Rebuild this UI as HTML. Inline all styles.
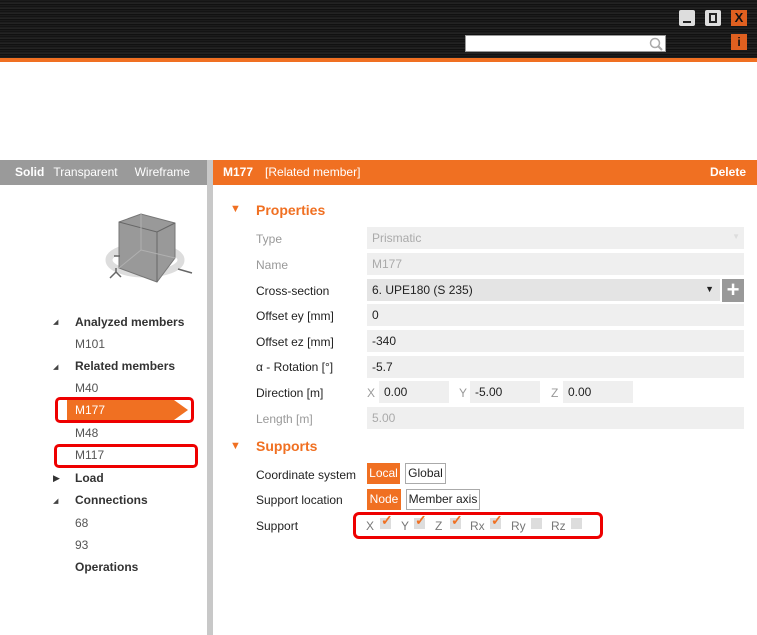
<!DOCTYPE html>
<html><head><style>
*{margin:0;padding:0;box-sizing:border-box}
body{width:757px;height:635px;overflow:hidden;background:#fff;font-family:"Liberation Sans",sans-serif;font-size:12px;color:#222;position:relative}
.a{position:absolute}
.hdr{left:0;top:0;width:757px;height:59px;background:repeating-linear-gradient(180deg,#1e1e1e 0,#111 2px,#2c2c2c 3px,#080808 5px)}
.ol{left:0;top:58px;width:757px;height:4px;background:#f07022}
.lbl{left:256px;font-size:12px}
.gray{color:#999}
.inp{left:367px;width:377px;height:22px;background:#efefef;padding:4px 5px;font-size:12px}
.tr{left:75px;font-size:12px;color:#555}
.trb{left:75px;font-size:12px;font-weight:bold;color:#333}
.tri{left:53px;font-size:7px;color:#444}
.cb{position:absolute;width:11px;height:11px;background:#ddd}
.ck{position:absolute;left:1px;top:-6px;color:#f07022;font-size:14px;font-weight:bold}
.sl{position:absolute;top:519px;color:#777}
</style></head><body>
<div class="a hdr"></div>
<div class="a ol"></div>
<div class="a" style="left:679px;top:10px;width:16px;height:16px;background:#ddd;border-radius:2px"><div class="a" style="left:4px;top:11px;width:8px;height:2px;background:#222"></div></div>
<div class="a" style="left:705px;top:10px;width:16px;height:16px;background:#ddd;border-radius:2px"><div class="a" style="left:4px;top:3px;width:8px;height:10px;border:2px solid #222"></div></div>
<div class="a" style="left:731px;top:10px;width:16px;height:16px;background:#e06020;color:#111;font-weight:bold;font-size:13px;text-align:center;line-height:16px">X</div>
<div class="a" style="left:731px;top:34px;width:16px;height:16px;background:#e06020;color:#111;font-weight:bold;font-size:12px;text-align:center;line-height:16px">i</div>
<div class="a" style="left:465px;top:35px;width:201px;height:17px;background:#fff;border:1px solid #999"><svg class="a" style="left:183px;top:1px" width="15" height="14"><circle cx="6" cy="6" r="4.5" fill="none" stroke="#aaa" stroke-width="1.5"/><path d="M9 9l4 4" stroke="#aaa" stroke-width="2"/></svg></div>

<div class="a" style="left:0;top:160px;width:207px;height:25px;background:#9a9a9a;color:#fff;font-size:12px;line-height:25px"><b style="margin-left:15px">Solid</b><span style="margin-left:9px">Transparent</span><span style="margin-left:17px">Wireframe</span></div>
<div class="a" style="left:207px;top:160px;width:6px;height:475px;background:#c8c8c8"></div>
<div class="a" style="left:213px;top:160px;width:544px;height:25px;background:#f07022;color:#fff;line-height:25px"><b style="margin-left:10px">M177</b><span style="margin-left:12px">[Related member]</span><b class="a" style="right:11px;top:0">Delete</b></div>

<svg class="a" style="left:100px;top:210px" width="95" height="80"><ellipse cx="45" cy="50" rx="36" ry="14" fill="none" stroke="#ddd" stroke-width="7"/><path d="M19 12L41 4L75 13L75 48L57 72L19 58Z" fill="#999" stroke="#777"/><path d="M19 12L57 22L75 13M57 22L57 72" fill="none" stroke="#666"/><path d="M41 4L41 40L19 58M41 40L75 48" fill="none" stroke="#b0b0b0"/><path d="M10 68l6-6 5 5M16 62v-4M78 59l14 4M14 46l6 0" stroke="#666" fill="none" stroke-width="1.5"/></svg>

<div class="a tri" style="top:318px">◢</div><div class="a trb" style="top:315px">Analyzed members</div>
<div class="a tr" style="top:337px">M101</div>
<div class="a tri" style="top:363px">◢</div><div class="a trb" style="top:359px">Related members</div>
<div class="a tr" style="top:381px">M40</div>
<div class="a" style="left:67px;top:400px;width:107px;height:21px;background:#f07022"></div>
<div class="a" style="left:174px;top:400px;width:0;height:0;border-top:10.5px solid transparent;border-bottom:10.5px solid transparent;border-left:14px solid #f07022"></div>
<div class="a" style="left:75px;top:403px;color:#fff">M177</div>
<div class="a" style="left:55px;top:397px;width:139px;height:26px;border:3px solid #e00;border-radius:5px"></div>
<div class="a tr" style="top:426px">M48</div>
<div class="a tr" style="top:448px">M117</div>
<div class="a" style="left:54px;top:444px;width:144px;height:24px;border:3px solid #e00;border-radius:5px"></div>
<div class="a" style="left:53px;top:473px;font-size:9px;color:#333">▶</div><div class="a trb" style="top:471px">Load</div>
<div class="a tri" style="top:497px">◢</div><div class="a trb" style="top:493px">Connections</div>
<div class="a tr" style="top:516px">68</div>
<div class="a tr" style="top:538px">93</div>
<div class="a trb" style="top:560px">Operations</div>

<div class="a" style="left:230px;top:203px;color:#f07022;font-size:11px">▼</div>
<div class="a" style="left:256px;top:202px;color:#f07022;font-size:14px;font-weight:bold">Properties</div>
<div class="a lbl gray" style="top:232px">Type</div><div class="a inp" style="top:227px;color:#aaa">Prismatic<span class="a" style="right:4px;top:5px;font-size:8px;color:#ddd">▼</span></div>
<div class="a lbl gray" style="top:258px">Name</div><div class="a inp" style="top:253px;color:#aaa">M177</div>
<div class="a lbl" style="top:284px">Cross-section</div><div class="a inp" style="top:279px;width:353px;background:#e4e4e4">6. UPE180 (S 235)<span class="a" style="right:6px;top:5px;font-size:9px">▼</span></div>
<div class="a" style="left:722px;top:279px;width:22px;height:23px;background:#999;color:#fff;font-size:22px;font-weight:bold;text-align:center;line-height:22px">+</div>
<div class="a lbl" style="top:309px">Offset ey [mm]</div><div class="a inp" style="top:304px">0</div>
<div class="a lbl" style="top:335px">Offset ez [mm]</div><div class="a inp" style="top:330px">-340</div>
<div class="a lbl" style="top:360px">α - Rotation [°]</div><div class="a inp" style="top:356px">-5.7</div>
<div class="a lbl" style="top:386px">Direction [m]</div>
<div class="a gray" style="left:367px;top:386px">X</div><div class="a inp" style="left:379px;top:381px;width:70px">0.00</div>
<div class="a gray" style="left:459px;top:386px">Y</div><div class="a inp" style="left:470px;top:381px;width:70px">-5.00</div>
<div class="a gray" style="left:551px;top:386px">Z</div><div class="a inp" style="left:563px;top:381px;width:70px">0.00</div>
<div class="a lbl gray" style="top:412px">Length [m]</div><div class="a inp" style="top:407px;color:#aaa">5.00</div>

<div class="a" style="left:230px;top:440px;color:#f07022;font-size:11px">▼</div>
<div class="a" style="left:256px;top:438px;color:#f07022;font-size:14px;font-weight:bold">Supports</div>
<div class="a lbl" style="top:468px">Coordinate system</div>
<div class="a" style="left:367px;top:463px;width:33px;height:21px;background:#f07022;color:#fff;line-height:21px;text-align:center">Local</div>
<div class="a" style="left:405px;top:463px;width:41px;height:21px;border:1px solid #aaa;line-height:19px;text-align:center">Global</div>
<div class="a lbl" style="top:493px">Support location</div>
<div class="a" style="left:367px;top:489px;width:34px;height:21px;background:#f07022;color:#fff;line-height:21px;text-align:center">Node</div>
<div class="a" style="left:406px;top:489px;width:74px;height:21px;border:1px solid #aaa;line-height:19px;text-align:center">Member axis</div>
<div class="a lbl" style="top:519px">Support</div>
<div class="a" style="left:353px;top:512px;width:250px;height:27px;border:3px solid #e00;border-radius:6px"></div>
<span class="sl" style="left:366px">X</span><span class="cb" style="left:380px;top:518px"><span class="ck">✓</span></span>
<span class="sl" style="left:401px">Y</span><span class="cb" style="left:414px;top:518px"><span class="ck">✓</span></span>
<span class="sl" style="left:435px">Z</span><span class="cb" style="left:450px;top:518px"><span class="ck">✓</span></span>
<span class="sl" style="left:470px">Rx</span><span class="cb" style="left:490px;top:518px"><span class="ck">✓</span></span>
<span class="sl" style="left:511px">Ry</span><span class="cb" style="left:531px;top:518px"></span>
<span class="sl" style="left:551px">Rz</span><span class="cb" style="left:571px;top:518px"></span>
</body></html>
